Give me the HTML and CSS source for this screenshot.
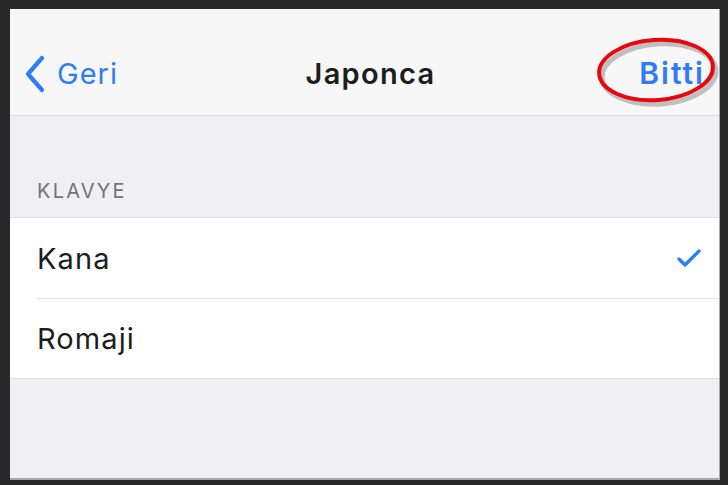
FILE: index.html
```html
<!DOCTYPE html>
<html lang="tr">
<head>
<meta charset="utf-8">
<title>Japonca</title>
<link rel="stylesheet" href="styles.css">
</head>
<body>
<div class="screen">
  <header class="nav">
    <div class="nav-left">
      <svg class="chev" width="22" height="38" viewBox="0 0 22 38"><path d="M18 3 L4 19 L18 35" fill="none" stroke="#2f7df6" stroke-width="4.2" stroke-linecap="round" stroke-linejoin="round"/></svg>
      <span class="back">Geri</span>
    </div>
    <div class="title">Japonca</div>
    <div class="nav-right"><span class="done">Bitti</span></div>
    <svg class="mark" width="140" height="84" viewBox="0 0 140 84">
      <ellipse cx="75" cy="46" rx="57" ry="30" fill="none" stroke="#7a7a7a" stroke-opacity="0.45" stroke-width="5" transform="rotate(-4 75 46)"/>
      <ellipse cx="72" cy="42" rx="57" ry="30" fill="none" stroke="#e8070f" stroke-width="4" transform="rotate(-4 72 42)"/>
    </svg>
  </header>
  <main class="content">
    <div class="section-head">KLAVYE</div>
    <ul class="list">
      <li class="row"><span>Kana</span>
        <svg class="check" width="26" height="20" viewBox="0 0 26 20"><path d="M3 11 L9 17 L23 3" fill="none" stroke="#2f7df6" stroke-width="3.4" stroke-linecap="round" stroke-linejoin="round"/></svg>
      </li>
      <li class="row"><span>Romaji</span></li>
    </ul>
  </main>
</div>
</body>
</html>
```

FILE: styles.css
```css
html, body {
  margin: 0;
  padding: 0;
  background: #282828;
  height: 100%;
}
body {
  padding: 9px 8px 5px 10px;
  box-sizing: border-box;
  font-family: Inter, "Liberation Sans", Arial, sans-serif;
}
.screen {
  width: 710px;
  height: 471px;
  background: #efeff4;
  border-right: 1px solid #a8a8a8;
  border-bottom: 2px solid #a8a8a8;
  box-sizing: border-box;
  display: flex;
  flex-direction: column;
  overflow: hidden;
}
.nav {
  position: relative;
  height: 107px;
  flex: none;
  background: #f7f7f8;
  border-bottom: 1px solid #dcdce0;
  box-sizing: border-box;
  display: flex;
  align-items: center;
  justify-content: space-between;
  padding: 22px 16px 0 14px;
}
.nav-left {
  display: flex;
  align-items: center;
  gap: 11px;
  width: 200px;
}
.chev { display: block; margin-top: 1px; }
.back {
  color: #2f7df6;
  font-size: 29px;
  letter-spacing: 1px;
}
.title {
  font-size: 29px;
  font-weight: 600;
  color: #1d1d1d;
  letter-spacing: 1.3px;
  margin-left: 14px;
}
.nav-right {
  width: 200px;
  display: flex;
  justify-content: flex-end;
}
.done {
  color: #2f7df6;
  font-size: 30px;
  font-weight: 600;
  letter-spacing: 2px;
  margin-right: -2px;
}
.mark {
  position: absolute;
  left: 574px;
  top: 19px;
}
.content {
  flex: 1;
  display: flex;
  flex-direction: column;
}
.section-head {
  height: 101px;
  box-sizing: border-box;
  padding: 63px 0 0 27px;
  font-size: 20px;
  color: #747478;
  letter-spacing: 2.2px;
}
.list {
  list-style: none;
  margin: 0;
  padding: 0 0 0 27px;
  background: #ffffff;
  border-top: 1px solid #e2e2e6;
  border-bottom: 1px solid #dcdce0;
}
.row {
  height: 80px;
  display: flex;
  align-items: center;
  justify-content: space-between;
  padding-right: 17px;
  font-size: 29px;
  color: #1d1d1d;
  letter-spacing: 1.1px;
  box-sizing: border-box;
}
.row + .row {
  border-top: 1px solid #e4e4e8;
}
.check { display: block; }
```
